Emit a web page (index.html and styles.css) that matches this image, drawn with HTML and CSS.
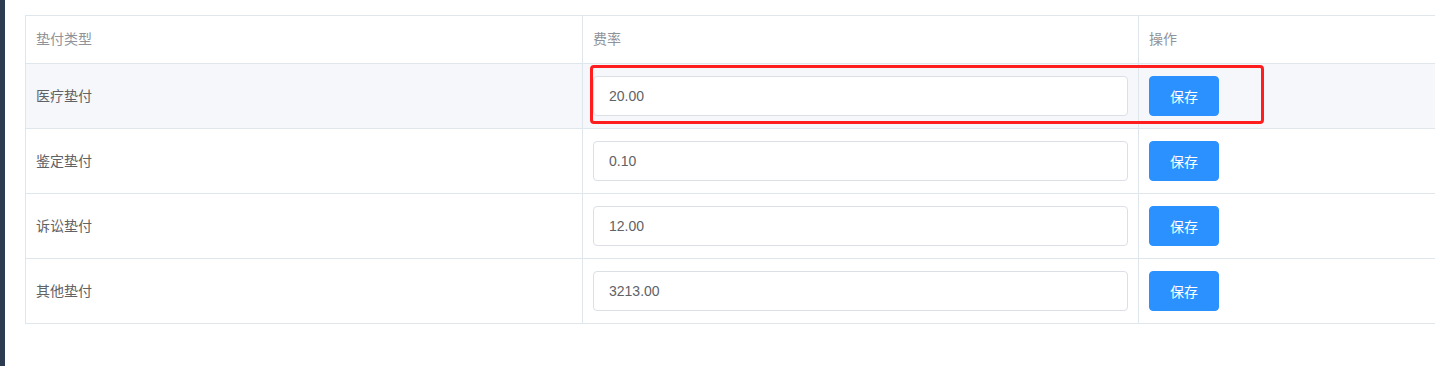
FILE: index.html
```html
<!DOCTYPE html>
<html lang="zh-CN">
<head>
<meta charset="utf-8">
<title>垫付费率设置</title>
<link rel="stylesheet" href="styles.css">
</head>
<body>
<div class="layout">
  <aside class="sidebar"></aside>
  <main class="main">
    <div class="table-wrap">
      <table class="rate-table">
        <colgroup>
          <col class="col-type">
          <col class="col-rate">
          <col class="col-op">
        </colgroup>
        <thead>
          <tr>
            <th><div class="cell">垫付类型</div></th>
            <th><div class="cell">费率</div></th>
            <th><div class="cell">操作</div></th>
          </tr>
        </thead>
        <tbody>
          <tr class="is-hover">
            <td><div class="cell">医疗垫付</div></td>
            <td><div class="cell"><input class="rate-input" type="text" value="20.00"></div></td>
            <td><div class="cell"><button class="btn-primary" type="button">保存</button></div></td>
          </tr>
          <tr>
            <td><div class="cell">鉴定垫付</div></td>
            <td><div class="cell"><input class="rate-input" type="text" value="0.10"></div></td>
            <td><div class="cell"><button class="btn-primary" type="button">保存</button></div></td>
          </tr>
          <tr>
            <td><div class="cell">诉讼垫付</div></td>
            <td><div class="cell"><input class="rate-input" type="text" value="12.00"></div></td>
            <td><div class="cell"><button class="btn-primary" type="button">保存</button></div></td>
          </tr>
          <tr>
            <td><div class="cell">其他垫付</div></td>
            <td><div class="cell"><input class="rate-input" type="text" value="3213.00"></div></td>
            <td><div class="cell"><button class="btn-primary" type="button">保存</button></div></td>
          </tr>
        </tbody>
      </table>
      <div class="highlight-box"></div>
    </div>
  </main>
</div>
</body>
</html>
```

FILE: styles.css
```css
html, body {
  margin: 0;
  padding: 0;
  height: 100%;
  overflow: hidden;
  background: #ffffff;
  font-family: "Liberation Sans", "Noto Sans CJK SC", sans-serif;
  font-size: 14px;
  color: #606266;
}

.layout {
  display: flex;
  height: 100%;
}

.sidebar {
  flex: 0 0 5px;
  background: #2d3b50;
}

/* the table is wider than the content area; the rest is clipped */
.main {
  flex: 1;
  min-width: 0;
  overflow: hidden;
  padding: 15px 0 0 20px;
}

.table-wrap {
  position: relative;
  width: 1670px;
}

.rate-table {
  table-layout: fixed;
  border-collapse: separate;
  border-spacing: 0;
  width: 1670px;
  border-top: 1px solid #dfe6ec;
  border-left: 1px solid #dfe6ec;
}

.col-type { width: 557px; }
.col-rate { width: 556px; }
.col-op { width: 556px; }

.rate-table th,
.rate-table td {
  padding: 12px 0;
  border-right: 1px solid #dfe6ec;
  border-bottom: 1px solid #dfe6ec;
  text-align: left;
  vertical-align: middle;
}

.rate-table th {
  font-weight: normal;
  color: #909399;
  background: #ffffff;
}

.rate-table tr.is-hover td {
  background: #f5f7fa;
}

.cell {
  padding: 0 10px;
  line-height: 23px;
  box-sizing: border-box;
}

.rate-input {
  display: block;
  box-sizing: border-box;
  width: 100%;
  height: 40px;
  margin: 0;
  padding: 0 15px;
  border: 1px solid #dcdfe6;
  border-radius: 4px;
  background: #ffffff;
  font-family: "Liberation Sans", "Noto Sans CJK SC", sans-serif;
  font-size: 14px;
  color: #606266;
  outline: none;
}

.btn-primary {
  display: block;
  width: 70px;
  height: 40px;
  margin: 0;
  padding: 0;
  border: 1px solid #2b91ff;
  border-radius: 4px;
  background: #2b91ff;
  color: #ffffff;
  font-family: "Liberation Sans", "Noto Sans CJK SC", sans-serif;
  font-size: 14px;
  cursor: pointer;
}

/* red annotation frame drawn over the first data row */
.highlight-box {
  position: absolute;
  left: 565px;
  top: 50px;
  width: 674px;
  height: 59px;
  box-sizing: border-box;
  border: 3px solid #ff1d1d;
  border-radius: 4px;
  pointer-events: none;
}
```
